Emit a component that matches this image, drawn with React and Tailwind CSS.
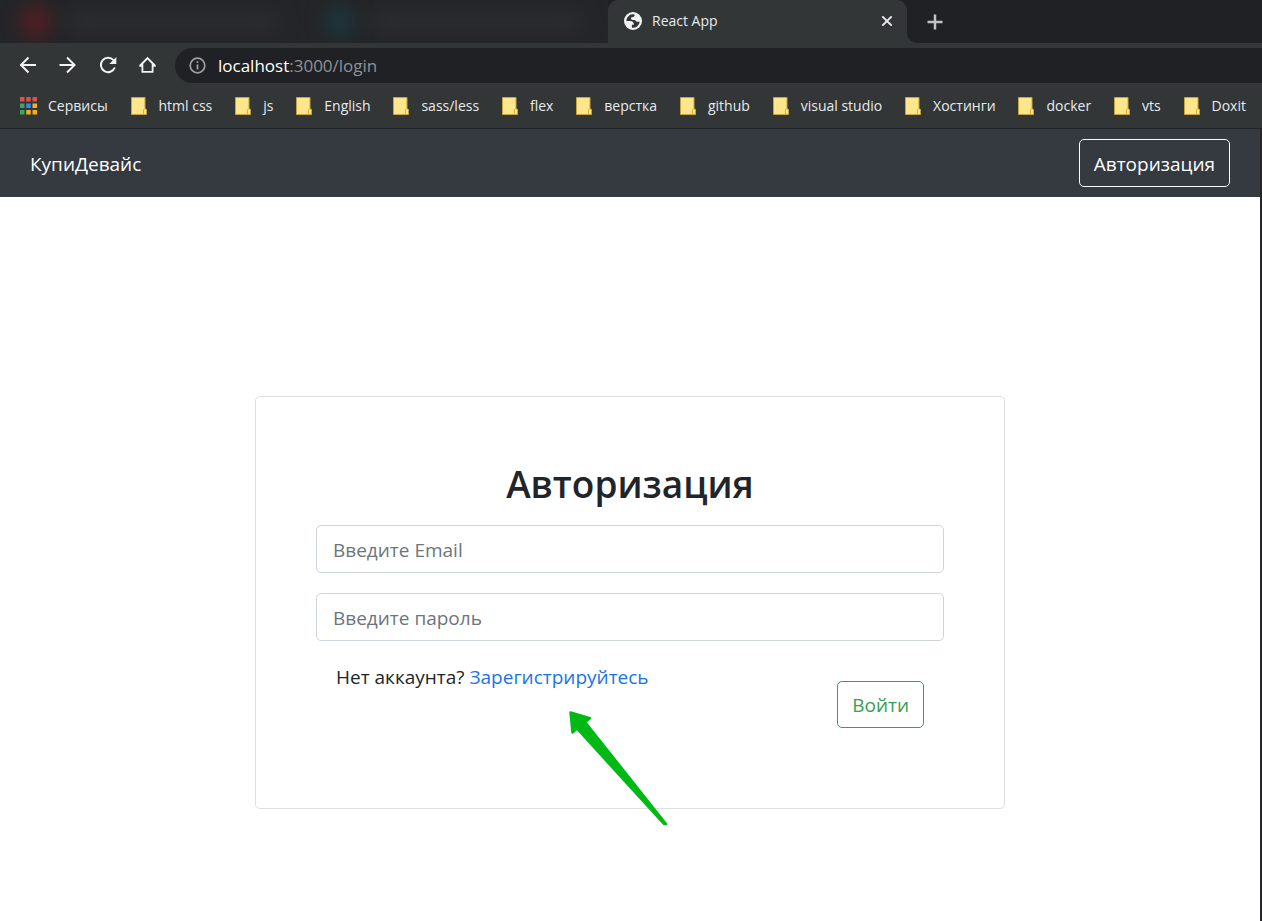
const bookmarks = [
  "html css", "js", "English", "sass/less", "flex", "верстка", "github",
  "visual studio", "Хостинги", "docker", "vts", "Doxit",
];

function LineIcon({ d, className = "size-6", width = 2, children }) {
  return (
    <svg viewBox="0 0 24 24" fill="none" stroke="currentColor" strokeWidth={width} className={className} aria-hidden="true">
      {d && <path d={d} />}
      {children}
    </svg>
  );
}

function GlobeIcon() {
  return (
    <svg width="18" height="18" viewBox="0 0 16 16" aria-hidden="true">
      <circle cx="8" cy="8" r="8" fill="#f1f3f4" />
      <path
        d="M2 8A6 6 0 0 1 9.500 2.200C9.500 4 8.800 4.300 7.800 4.400 6.600 4.500 6 5 6.200 6.100 6.400 7 7.500 7.200 9 7.200c1.300 0 1.500 1.500 2.600 1.500H14A6 6 0 0 1 7 13.900V11.400h1.800C8.800 9.100 7.700 8 5.400 8z"
        fill="#323637"
      />
    </svg>
  );
}

function FolderIcon() {
  return (
    <svg width="16" height="18" viewBox="0 0 16 18" aria-hidden="true">
      <path d="M.5.5h13.500v11l1.500 1v5H.5z" fill="#fde68c" stroke="#c9a33a" />
      <path d="M12.500 17v-4.500c0-1 2-1 2 0" fill="none" stroke="#e0b030" />
    </svg>
  );
}

function AppsIcon() {
  const colors = ["#e0504a", "#e0504a", "#e0504a", "#3fa45f", "#2f8cf0", "#f2b01e", "#3fa45f", "#f2b01e", "#f2b01e"];
  return (
    <svg width="17" height="18" viewBox="0 0 17 18" aria-hidden="true">
      {colors.map((c, i) => (
        <rect key={i} x={(i % 3) * 6.25} y={Math.floor(i / 3) * 6.5} width="4.500" height="4.500" fill={c} />
      ))}
    </svg>
  );
}

function HiddenTab({ dot }) {
  return (
    <div className="flex h-full flex-1 items-center gap-4 pl-5">
      <span className={`size-8 rounded-full blur-[9px] ${dot}`} />
      <span className="h-4 w-[210px] bg-[#2e2f32] blur-[10px]" />
    </div>
  );
}

function TabStrip() {
  return (
    <div className="flex h-[43px] bg-[#202124]">
      <div className="flex w-[608px] overflow-hidden bg-[#242528]">
        <HiddenTab dot="bg-[#521f22]" />
        <HiddenTab dot="bg-[#1d363c]" />
      </div>
      <div className="flex w-[299px] items-center rounded-t-[10px] bg-[#323637] pr-3 pb-0.5 pl-4 text-[#e8eaed]">
        <GlobeIcon />
        <span className="ml-[10px] flex-1 text-[14px]">React App</span>
        <button aria-label="Закрыть вкладку"><LineIcon className="size-4" width={3} d="m5 5 14 14M19 5 5 19" /></button>
      </div>
      <div className="flex flex-1 bg-[#323637]">
        <div className="flex flex-1 items-center rounded-bl-[10px] bg-[#202124] pl-4">
          <button aria-label="Новая вкладка" className="text-[#c0c3c6]"><LineIcon width={2.5} d="M12 4.500v15M4.500 12h15" /></button>
        </div>
      </div>
    </div>
  );
}

function Toolbar() {
  return (
    <div className="flex h-[45px] items-center bg-[#323637] pl-4 text-[#f1f3f4]">
      <div className="flex w-[159px] gap-4 pb-px">
        <button aria-label="Назад"><LineIcon d="M20 12H5M12.500 4.500 5 12l7.500 7.500" /></button>
        <button aria-label="Вперёд"><LineIcon d="M3.500 12h15M11 4.500 18.500 12 11 19.500" /></button>
        <button aria-label="Обновить">
          <LineIcon d="M18.800 14.500A7.200 7.200 0 1 1 17.500 7.200">
            <path d="M20.300 4v7h-7z" fill="currentColor" stroke="none" />
          </LineIcon>
        </button>
        <button aria-label="Домой">
          <LineIcon>
            <path
              d="M11.500 3.800 3.300 12v1.800h2.200v6h12v-6h2.200V12zM11.500 6.600l4.200 4.200v7.100H7.300v-7.100z"
              fill="currentColor"
              fillRule="evenodd"
              stroke="none"
            />
          </LineIcon>
        </button>
      </div>
      <div className="flex h-[35px] flex-1 items-center gap-3 rounded-l-full bg-[#202124] pl-[14px]">
        <svg width="17" height="17" viewBox="0 0 17 17" fill="none" stroke="#9aa0a6" aria-hidden="true">
          <circle cx="8.500" cy="8.500" r="7.300" strokeWidth="1.700" />
          <path d="M8.500 7.500v5M8.500 4.300v1.800" strokeWidth="1.800" />
        </svg>
        <span className="text-[17px] text-[#8f9296]"><span className="text-white">localhost</span>:3000/login</span>
      </div>
    </div>
  );
}

function Bookmarks() {
  return (
    <nav className="flex h-[41px] items-center justify-between border-b border-[#202124] bg-[#323637] pb-1 pr-4 pl-5 text-[14px] whitespace-nowrap text-[#e8eaed]">
      <a href="#apps" className="flex items-center gap-[11px]"><AppsIcon /><span className="pb-0.5">Сервисы</span></a>
      {bookmarks.map((name) => (
        <a key={name} href="#bookmark" className="flex items-center gap-3"><FolderIcon /><span className="pb-0.5">{name}</span></a>
      ))}
    </nav>
  );
}

const field = "h-12 w-full rounded-[5px] border border-[#ced4da] px-4 pt-0.5 text-[19px] text-[#495057] placeholder:text-[#6c757d]";

function LoginCard() {
  return (
    <form className="flex w-[750px] max-w-full flex-col rounded-[5px] border border-[#dfdfdf] p-[60px]">
      <h1 className="text-center text-[37px] leading-[54px] font-semibold">Авторизация</h1>
      <div className="mt-[14px] flex flex-col gap-5">
        <input type="email" aria-label="Email" placeholder="Введите Email" className={field} />
        <input type="password" aria-label="Пароль" placeholder="Введите пароль" className={field} />
      </div>
      <div className="relative mt-5 flex items-start justify-between px-5 text-[19px]">
        <p className="leading-8">Нет аккаунта? <a href="#registration" className="text-[#1a73e8]">Зарегистрируйтесь</a></p>
        <button type="button" className="my-5 h-[47px] rounded-[5px] border border-[#3a9d55] px-[14px] pt-0.5 text-[#3a9d55]">Войти</button>
        <svg className="pointer-events-none absolute top-[50px] left-[252px]" width="101" height="116" viewBox="0 0 101 116" aria-hidden="true">
          <path d="M2.500 1.500 22 7.200 17 11 98 113 96 113 9 17.500 4.500 21.500z" fill="#00b914" stroke="#00b914" strokeWidth="2.500" strokeLinejoin="round" />
        </svg>
      </div>
    </form>
  );
}

export default function App() {
  return (
    <div className="flex min-h-screen flex-col bg-[#242528] font-['Open_Sans',sans-serif]">
      <header>
        <TabStrip />
        <Toolbar />
        <Bookmarks />
      </header>
      <div className="mr-[2px] flex flex-1 flex-col bg-white text-[#212529]">
        <div className="flex h-[68px] items-center justify-between bg-[#343a40] px-[30px] text-[19px] text-white">
          <a href="#shop" className="pt-0.5">КупиДевайс</a>
          <button className="h-12 rounded-[5px] border border-[#f8f9fa] px-[14px] pt-0.5">Авторизация</button>
        </div>
        <main className="flex flex-1 items-start justify-center pt-[199px]">
          <LoginCard />
        </main>
      </div>
    </div>
  );
}
